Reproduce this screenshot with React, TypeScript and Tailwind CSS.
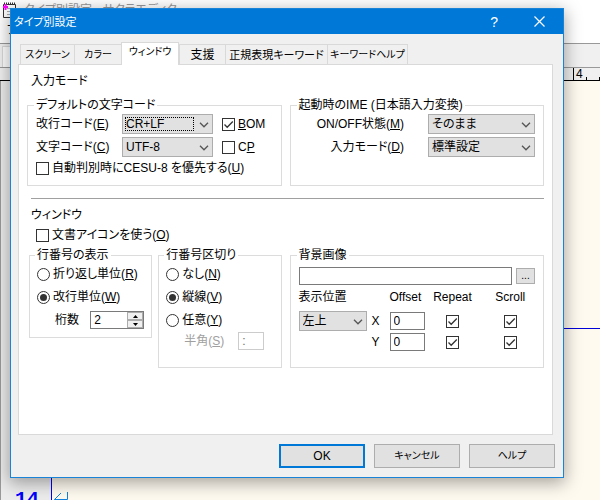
import * as React from "react"
import clsx from "clsx";

const Chevron: React.FC = () => (
    <svg viewBox="0 0 10 6" className="pointer-events-none absolute right-1 top-2 h-1.5 w-2.5" fill="none" stroke="#555" strokeWidth="1.3">
        <path d="M1 0.8 L5 4.8 L9 0.8"/>
    </svg>
);

type ComboProps = { id: string; value: string; options?: string[]; label?: string; focused?: boolean; className?: string };

const Combo: React.FC<ComboProps> = ({id, value, options = [], label, focused, className}) => (
    <span className={clsx("relative block h-5 shrink-0", className)}>
        <select id={id} aria-label={label} defaultValue={value}
                className="block h-5 w-full appearance-none border border-[#adadad] bg-[#e1e1e1] pl-[3px] pr-4 text-xs leading-4 outline-none">
            {[value, ...options].map((o) => <option key={o}>{o}</option>)}
        </select>
        {focused && <span className="pointer-events-none absolute inset-y-[3px] left-[3px] right-[19px] border border-dotted border-black"/>}
        <Chevron/>
    </span>
);

const Check: React.FC<{ id: string; checked?: boolean; label?: string }> = ({id, checked, label}) => (
    <span className="relative block size-[13px] shrink-0">
        <input id={id} type="checkbox" aria-label={label} defaultChecked={checked}
               className="peer block size-[13px] appearance-none border border-[#333] bg-white"/>
        <svg viewBox="0 0 13 13" className="pointer-events-none absolute inset-0 hidden peer-checked:block" fill="none" stroke="#333" strokeWidth="1.3">
            <path d="M2.5 6.5 L5.2 9.3 L10.8 3.5"/>
        </svg>
    </span>
);

const Radio: React.FC<{ id: string; name: string; checked?: boolean; children: React.ReactNode }> = ({id, name, checked, children}) => (
    <div className="flex h-5 items-center gap-[3px]">
        <span className="relative block size-[13px] shrink-0">
            <input id={id} name={name} type="radio" defaultChecked={checked}
                   className="peer block size-[13px] appearance-none rounded-full border border-[#333] bg-white"/>
            <span className="pointer-events-none absolute inset-[3px] hidden rounded-full bg-[#333] peer-checked:block"/>
        </span>
        <label htmlFor={id}>{children}</label>
    </div>
);

const Group: React.FC<{ title: string; className?: string; children: React.ReactNode }> = ({title, className, children}) => (
    <fieldset className={clsx("min-w-0 border border-[#dcdcdc]", className)}>
        <legend className="-ml-0.5 px-0.5">{title}</legend>
        {children}
    </fieldset>
);

const TextBox: React.FC<{ id: string; value?: string; label?: string; disabled?: boolean; className?: string }> = ({id, value = "", label, disabled, className}) => (
    <input id={id} type="text" aria-label={label} defaultValue={value} disabled={disabled}
           className={clsx("block h-[18px] min-w-0 border bg-white pl-[3px] text-xs leading-4 outline-none",
               disabled ? "border-[#ccc] text-[#6d6d6d]" : "border-[#7a7a7a]", className)}/>
);

const tabs = [
    {name: "スクリーン", width: "w-[55px] text-[10px]"},
    {name: "カラー", width: "w-[48px] text-[10px]"},
    {name: "ウィンドウ", width: "w-[58px] text-[10px]", active: true},
    {name: "支援", width: "w-[47px] text-xs"},
    {name: "正規表現キーワード", width: "w-[103px] text-[11px]"},
    {name: "キーワードヘルプ", width: "w-[81px] text-[10px]"},
];

const Tabs: React.FC = () => (
    <div role="tablist" className="flex h-[22px] items-end pl-0.5">
        {tabs.map((t) => (
            <button key={t.name} type="button" role="tab" aria-selected={!!t.active}
                    className={clsx("shrink-0 whitespace-nowrap border border-b-0 border-[#d9d9d9] text-center", t.width,
                        t.active ? "relative -mb-px h-[23px] bg-white pb-1" : "-mr-px h-5 bg-[#f0f0f0]")}>
                {t.name}
            </button>
        ))}
    </div>
);

const InputMode: React.FC = () => (
    <div className="mt-2 grid grid-cols-2 gap-2">
        <Group title="デフォルトの文字コード" className="px-2 pb-[9px]">
            <div className="flex flex-col gap-[3px] pt-px">
                <div className="flex h-5 items-center">
                    <label htmlFor="eol" className="w-[86px]">改行コード(<u>E</u>)</label>
                    <Combo id="eol" value="CR+LF" options={["LF", "CR"]} focused className="w-[91px]"/>
                    <span className="ml-[9px] flex items-center gap-[3px]">
                        <Check id="bom" checked/>
                        <label htmlFor="bom"><u>B</u>OM</label>
                    </span>
                </div>
                <div className="flex h-5 items-center">
                    <label htmlFor="charset" className="w-[86px]">文字コード(<u>C</u>)</label>
                    <Combo id="charset" value="UTF-8" options={["SJIS", "EUC"]} className="w-[91px]"/>
                    <span className="ml-[9px] flex items-center gap-[3px]">
                        <Check id="cp"/>
                        <label htmlFor="cp">C<u>P</u></label>
                    </span>
                </div>
                <div className="flex h-4 items-center gap-[3px]">
                    <Check id="cesu"/>
                    <label htmlFor="cesu">自動判別時にCESU-8 を優先する(<u>U</u>)</label>
                </div>
            </div>
        </Group>
        <Group title="起動時のIME (日本語入力変換)" className="px-2">
            <div className="flex flex-col gap-[3px] pt-px">
                <div className="flex h-5 items-center justify-end gap-6">
                    <label htmlFor="ime">ON/OFF状態(<u>M</u>)</label>
                    <Combo id="ime" value="そのまま" options={["常にON", "常にOFF"]} className="w-[107px]"/>
                </div>
                <div className="flex h-5 items-center justify-end gap-6">
                    <label htmlFor="imemode">入力モード(<u>D</u>)</label>
                    <Combo id="imemode" value="標準設定" options={["全角"]} className="w-[107px]"/>
                </div>
            </div>
        </Group>
    </div>
);

const LineNumbers: React.FC = () => (
    <Group title="行番号の表示" className="px-[7px] pb-[7px]">
        <div className="flex flex-col gap-[3px] pt-px">
            <Radio id="wrap" name="unit">折り返し単位(<u>R</u>)</Radio>
            <Radio id="line" name="unit" checked>改行単位(<u>W</u>)</Radio>
            <div className="flex h-5 items-center pl-[18px]">
                <label htmlFor="digits" className="w-[39px]">桁数</label>
                <span className="flex h-[18px] w-[54px] shrink-0 border border-[#7a7a7a] bg-white">
                    <input id="digits" type="text" defaultValue="2" className="w-0 flex-1 pl-[3px] leading-4 outline-none"/>
                    <span className="flex w-4 flex-col">
                        <button type="button" aria-label="増やす" className="flex h-2 items-center justify-center border border-[#acacac] bg-[#f0f0f0]">
                            <svg viewBox="0 0 5 3" className="h-[3px] w-[5px]"><path d="M2.5 0 L5 3 H0 Z"/></svg>
                        </button>
                        <button type="button" aria-label="減らす" className="flex h-2 items-center justify-center border border-[#acacac] bg-[#f0f0f0]">
                            <svg viewBox="0 0 5 3" className="h-[3px] w-[5px]"><path d="M0 0 H5 L2.5 3 Z"/></svg>
                        </button>
                    </span>
                </span>
            </div>
        </div>
    </Group>
);

const Separator: React.FC = () => (
    <Group title="行番号区切り" className="px-[7px] pb-[18px]">
        <div className="flex flex-col gap-[3px] pt-px">
            <Radio id="none" name="sep">なし(<u>N</u>)</Radio>
            <Radio id="vline" name="sep" checked>縦線(<u>V</u>)</Radio>
            <Radio id="any" name="sep">任意(<u>Y</u>)</Radio>
            <div className="flex h-4 items-center pl-[18px] text-[#a0a0a0]">
                <label htmlFor="half" className="w-[54px]">半角(<u>S</u>)</label>
                <TextBox id="half" value=":" disabled className="w-[26px]"/>
            </div>
        </div>
    </Group>
);

const BackImage: React.FC = () => (
    <Group title="背景画像" className="px-2 pb-4">
        <div className="flex items-center gap-1 pt-1">
            <TextBox id="image" label="背景画像" className="flex-1"/>
            <button type="button" className="h-4 w-[19px] border border-[#adadad] bg-[#e1e1e1] text-[10px] leading-3">...</button>
        </div>
        <div className="-mr-1.5 mt-1 grid grid-cols-[68px_23px_36px_54px_1fr] items-center gap-y-0.5">
            <span className="col-span-2 mb-1">表示位置</span>
            <span className="mb-1">Offset</span>
            <span className="mb-1 text-center">Repeat</span>
            <span className="mb-1 text-center">Scroll</span>

            <Combo id="pos" label="表示位置" value="左上" options={["右上", "中央"]} className="w-[68px]"/>
            <label htmlFor="offx" className="pl-[5px]">X</label>
            <TextBox id="offx" value="0" className="w-[35px]"/>
            <span className="justify-self-center"><Check id="repx" label="Repeat X" checked/></span>
            <span className="justify-self-center"><Check id="scrx" label="Scroll X" checked/></span>

            <label htmlFor="offy" className="col-start-2 pl-[5px]">Y</label>
            <TextBox id="offy" value="0" className="w-[35px]"/>
            <span className="justify-self-center"><Check id="repy" label="Repeat Y" checked/></span>
            <span className="justify-self-center"><Check id="scry" label="Scroll Y" checked/></span>
        </div>
    </Group>
);

const Dialog: React.FC = () => (
    <div role="dialog" aria-label="タイプ別設定"
         className="relative mb-5 ml-2.5 mr-9 mt-2 border border-[#1883d7] bg-[#f0f0f0] shadow-[0_4px_16px_1px_rgba(0,0,0,0.35)]">
        <header className="flex h-[25px] items-center bg-[#0078d7] pl-[3px] pr-[18px] text-white">
            <h1 className="flex-1 text-[11px]">タイプ別設定</h1>
            <button type="button" className="mr-9 text-sm leading-4">?</button>
            <button type="button" aria-label="閉じる">
                <svg viewBox="0 0 11 11" className="size-[11px]" stroke="white" strokeWidth="1.2"><path d="M0.5 0.5 L10.5 10.5 M10.5 0.5 L0.5 10.5"/></svg>
            </button>
        </header>
        <div className="px-[7px] pb-[9px] pt-2">
            <div className="mr-[3px]">
                <Tabs/>
                <section className="border border-[#d9d9d9] bg-white px-2 pb-[66px] pt-2">
                    <h2 className="pl-1">入力モード</h2>
                    <InputMode/>
                    <hr className="ml-1 mt-3 border-[#a0a0a0]"/>
                    <h2 className="mt-2 pl-1">ウィンドウ</h2>
                    <div className="mt-1 flex h-4 items-center gap-[3px] pl-[9px]">
                        <Check id="docicon"/>
                        <label htmlFor="docicon">文書アイコンを使う(<u>O</u>)</label>
                    </div>
                    <div className="mt-1 grid grid-cols-2 items-start gap-2">
                        <div className="grid grid-cols-2 items-start gap-1.5 pl-0.5">
                            <LineNumbers/>
                            <Separator/>
                        </div>
                        <BackImage/>
                    </div>
                </section>
            </div>
            <footer className="mr-px mt-[9px] flex justify-end gap-[9px]">
                <button type="button" className="h-6 w-[86px] border-2 border-[#0078d7] bg-[#e1e1e1]">OK</button>
                <button type="button" className="h-6 w-[86px] border border-[#adadad] bg-[#e1e1e1] text-[10px]">キャンセル</button>
                <button type="button" className="h-6 w-[86px] border border-[#adadad] bg-[#e1e1e1] text-[10px]">ヘルプ</button>
            </footer>
        </div>
    </div>
);

const columns = Array.from({length: 50}, (_, i) => i);
const lines = Array.from({length: 14}, (_, i) => i + 1);

// Editor window behind the dialog
const Editor: React.FC = () => (
    <div className="absolute inset-0 flex flex-col overflow-hidden bg-white">
        <div className="flex h-5 shrink-0 items-center gap-2 pl-[3px] text-[#999]">
            <svg viewBox="0 0 13 16" className="h-4 w-[13px]" fill="none">
                <path d="M0.5 2.5 H12.5 V13.5 L10.5 15.5 H0.5 Z" fill="white" stroke="#333"/>
                <path d="M1 1.5 H12" stroke="#333" strokeWidth="2" strokeDasharray="1 1"/>
                <path d="M4 6.5 H10 M4 9.5 H10 M4 12.5 H9" stroke="#aaa"/>
                <path d="M2.5 2 V8 M0 5 H5" stroke="#f0f" strokeWidth="2"/>
            </svg>
            <span>タイプ別設定 - サクラエディタ</span>
        </div>
        <div className="h-[23px] shrink-0 pl-[7px] pt-0.5">ファイル(F)</div>
        <div className="h-6 shrink-0 border-t border-[#999] bg-[#f0f0f0] pl-0.5 pt-0.5">
            <div className="h-full w-32 border border-b-0 border-[#d9d9d9] bg-white"/>
        </div>
        <div className="flex h-3.5 shrink-0 items-end border-b border-t border-b-black border-t-[#999] bg-[#f0f0f0] pl-[53px]">
            {columns.map((c) => (
                <span key={c} className={clsx("w-[13px] shrink-0 border-l border-black pl-0.5 text-xs leading-3", c % 10 ? "h-[3px]" : "h-full")}>
                    {c === 40 && "4"}
                </span>
            ))}
        </div>
        <div className="flex-1 border-l border-[#999] bg-[#fffaf0]">
            {lines.map((n) => (
                <div key={n} className="flex h-[31px]">
                    <span className="w-[51px] border-r border-[#0000ff] bg-[#ececec] pr-3 pt-0.5 text-right font-['Liberation_Mono'] text-xl font-bold leading-7 text-[#0000ff]">{n === 14 && n}</span>
                    <span className={clsx("flex-1 pl-0.5 pt-2", n === 8 && "border-b border-[#0000d8]")}>
                        {n === 14 && (
                            <svg viewBox="0 0 14 12" className="h-3 w-3.5" fill="none" stroke="#1080e0">
                                <path d="M13.5 0 V7.5 H0.5 L7 1 M0.5 7.5 L4 11"/>
                            </svg>
                        )}
                    </span>
                </div>
            ))}
        </div>
    </div>
);

export default function App() {
    return (
        <main className="relative flow-root min-h-screen font-['Liberation_Sans','Noto_Sans_CJK_JP',sans-serif] text-xs leading-4 text-black [font-feature-settings:'palt']">
            <Editor/>
            <Dialog/>
        </main>
    );
}
